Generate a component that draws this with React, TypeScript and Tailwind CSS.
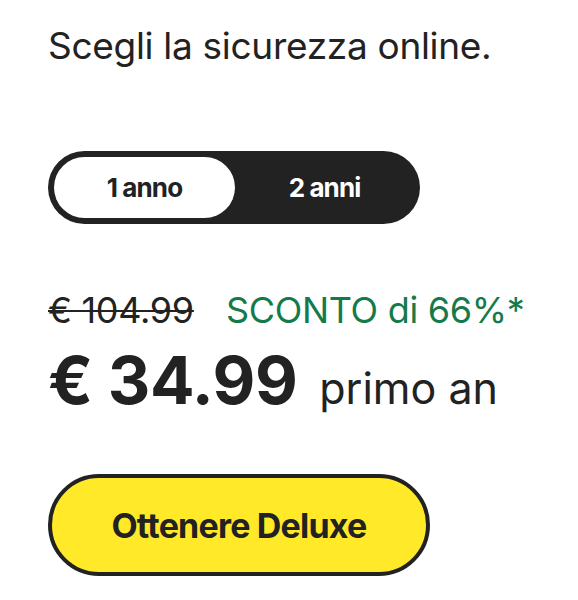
export default function App() {
  return (
    <div className="min-h-[600px] bg-white px-12 pt-[24px] text-[#222222] font-['Inter','Noto_Sans',sans-serif]">
      {/* HEADING */}
      <h1 className="text-[37px] leading-[44px] font-normal tracking-[-0.3px]">
        Scegli la sicurezza online.
      </h1>

      {/* TERM TOGGLE */}
      <div className="mt-[83px] flex w-[372px] h-[73px] rounded-full bg-[#222222] p-[6px]">
        <button className="w-[181px] rounded-full bg-white text-[26px] font-bold tracking-[-0.9px] text-[#222222]">
          1 anno
        </button>
        <button className="flex-1 text-[26px] font-bold tracking-[-0.9px] text-white">
          2 anni
        </button>
      </div>

      {/* PRICE */}
      <div className="mt-[66px] flex items-baseline gap-[32px] text-[36px] leading-[40px] tracking-[-0.3px]">
        <span className="line-through decoration-[2px]">€ 104.99</span>
        <span className="text-[#157a4a]">SCONTO di 66%*</span>
      </div>
      <div className="flex items-baseline gap-[22px] mt-[14px]">
        <span className="text-[66px] leading-[72px] font-bold tracking-[-0.5px]">€ 34.99</span>
        <span className="text-[43px] leading-[48px]">primo an</span>
      </div>

      {/* CTA */}
      <button className="mt-[58px] w-[382px] h-[102px] rounded-full bg-[#ffe928] border-4 border-[#222222] text-[34px] font-bold tracking-[-0.8px] text-[#222222]">
        Ottenere Deluxe
      </button>
    </div>
  );
}
